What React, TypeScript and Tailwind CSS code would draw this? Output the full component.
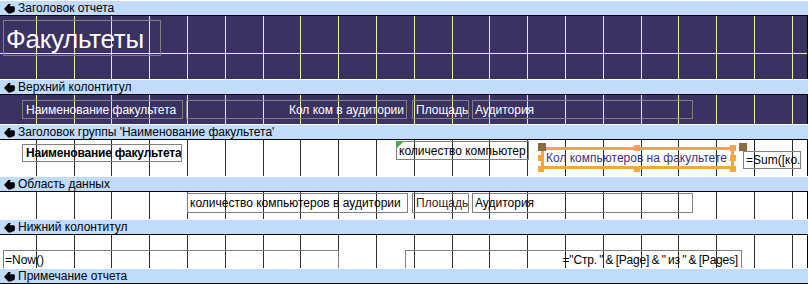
import type { ReactNode } from "react";

// 1 cm grid in px at 96 dpi
const GRID = Array.from({ length: 22 }, (_, i) => Math.round(37.8 * (i + 1)) - 1);
const CELLS = GRID.map((x, i) => x - (i === 0 ? 0 : GRID[i - 1]));

function SectionBar({ label }: { label: string }) {
  return (
    <div className="h-[16px] bg-[#c1dbfb] border-t border-b border-t-white border-b-black flex items-center text-[12px] text-black leading-none">
      <svg className="ml-[4px] mr-[3px] w-[11px] h-[11px]" viewBox="0 0 10 10">
        <path d="M0 5.5 L4 1 L6.2 1 L5.2 3 L9.2 3 L10 4.6 L9.6 8 L6 9.5 L4 9.5 Z" fill="#000" />
      </svg>
      <span>{label}</span>
    </div>
  );
}

function Section({
  height,
  dark,
  children,
}: {
  height: number;
  dark?: boolean;
  children?: ReactNode;
}) {
  const border = dark ? "border-r-[#f4ee9c]" : "border-r-[#2e2e2e]";
  return (
    <div
      className={`relative overflow-hidden border-r border-r-black ${dark ? "bg-[#393263]" : "bg-white"}`}
      style={{ height }}
    >
      <div className="absolute inset-0 flex">
        {CELLS.map((w, i) => (
          <div key={i} className={`shrink-0 h-full border-r ${border}`} style={{ width: w }} />
        ))}
      </div>
      {height > 40 && (
        <div className={`absolute left-0 right-0 top-[37px] h-px ${dark ? "bg-[#f4ee9c]" : "bg-[#2e2e2e]"}`} />
      )}
      {children}
    </div>
  );
}

function Box({ className, children }: { className: string; children?: ReactNode }) {
  return (
    <div
      className={`shrink-0 border border-[#808080] whitespace-nowrap overflow-hidden text-[12px] leading-none flex items-center ${className}`}
    >
      {children}
    </div>
  );
}

function Handle({ className }: { className: string }) {
  return <div className={`absolute w-[6px] h-[6px] bg-[#f7a53c] ${className}`} />;
}

export default function App() {
  return (
    <div className="w-[808px] h-[284px] overflow-hidden bg-white font-['Liberation_Sans',Arial,sans-serif]">
      <SectionBar label="Заголовок отчета" />
      <Section height={63} dark>
        <div className="absolute left-[3px] top-[4px]">
          <Box className="w-[158px] h-[36px] pl-[2px] pt-[2px] text-white text-[26px] tracking-[-0.3px]">Факультеты</Box>
        </div>
      </Section>

      <SectionBar label="Верхний колонтитул" />
      <Section height={29} dark>
        <div className="absolute left-[22px] top-[5px] flex text-white">
          <Box className="w-[161px] h-[19px] pl-[3px]">Наименование факультета</Box>
          <Box className="ml-[3px] w-[221px] h-[19px] pr-[2px] justify-end">Кол ком в аудитории</Box>
          <Box className="ml-[5px] w-[57px] h-[19px] pl-[3px]">Площадь</Box>
          <Box className="ml-[3px] w-[221px] h-[19px] pl-[2px]">Аудитория</Box>
        </div>
      </Section>

      <SectionBar label="Заголовок группы 'Наименование факультета'" />
      <Section height={36}>
        <div className="absolute left-[22px] top-[1px] flex items-start text-black">
          <Box className="mt-[3px] w-[160px] h-[18px] pl-[3px] font-bold tracking-[-0.2px]">
            Наименование факультета
          </Box>
          <Box className="relative ml-[214px] w-[133px] h-[19px] pl-[2px]">
            <div className="absolute left-0 top-0 w-0 h-0 border-t-[6px] border-r-[6px] border-t-[#22c41e] border-r-transparent" />
            количество компьютер
          </Box>
        </div>
        <div className="absolute left-[541px] top-[7px] w-[193px] h-[22px] border-[3px] border-[#f7a53c] pl-[2px] flex items-center text-[12px] leading-none text-[#3b2f7e] whitespace-nowrap overflow-hidden">
          Кол компьютеров на факультете
        </div>
        <div className="absolute left-[538px] top-[3px] w-[8px] h-[8px] bg-[#8c6b3e]" />
        <Handle className="left-[634px] top-[5px]" />
        <Handle className="left-[730px] top-[5px]" />
        <Handle className="left-[538px] top-[15px]" />
        <Handle className="left-[730px] top-[15px]" />
        <Handle className="left-[538px] top-[26px]" />
        <Handle className="left-[634px] top-[26px]" />
        <Handle className="left-[730px] top-[26px]" />
        <div className="absolute left-[739px] top-[3px] w-[8px] h-[8px] bg-[#8c6b3e]" />
        <div className="absolute left-[743px] top-[11px] text-black">
          <Box className="w-[58px] h-[18px] pl-[2px]">=Sum([ко.</Box>
        </div>
      </Section>

      <SectionBar label="Область данных" />
      <Section height={27}>
        <div className="absolute left-[187px] top-[1px] flex text-black">
          <Box className="w-[221px] h-[20px] pl-[2px]">количество компьютеров в аудитории</Box>
          <Box className="ml-[4px] w-[57px] h-[20px] pl-[3px] text-[#3a1a1a]">Площадь</Box>
          <Box className="ml-[3px] w-[221px] h-[20px] pl-[2px]">Аудитория</Box>
        </div>
      </Section>

      <SectionBar label="Нижний колонтитул" />
      <Section height={33}>
        <div className="absolute left-[3px] top-[15px] flex text-black">
          <Box className="w-[336px] h-[19px] pl-[1px]">=Now()</Box>
          <Box className="ml-[66px] w-[337px] h-[19px] pr-[3px] justify-end tracking-[-0.2px] [word-spacing:-0.8px]">
            ="Стр. " &amp; [Page] &amp; " из " &amp; [Pages]
          </Box>
        </div>
      </Section>

      <SectionBar label="Примечание отчета" />
    </div>
  );
}
